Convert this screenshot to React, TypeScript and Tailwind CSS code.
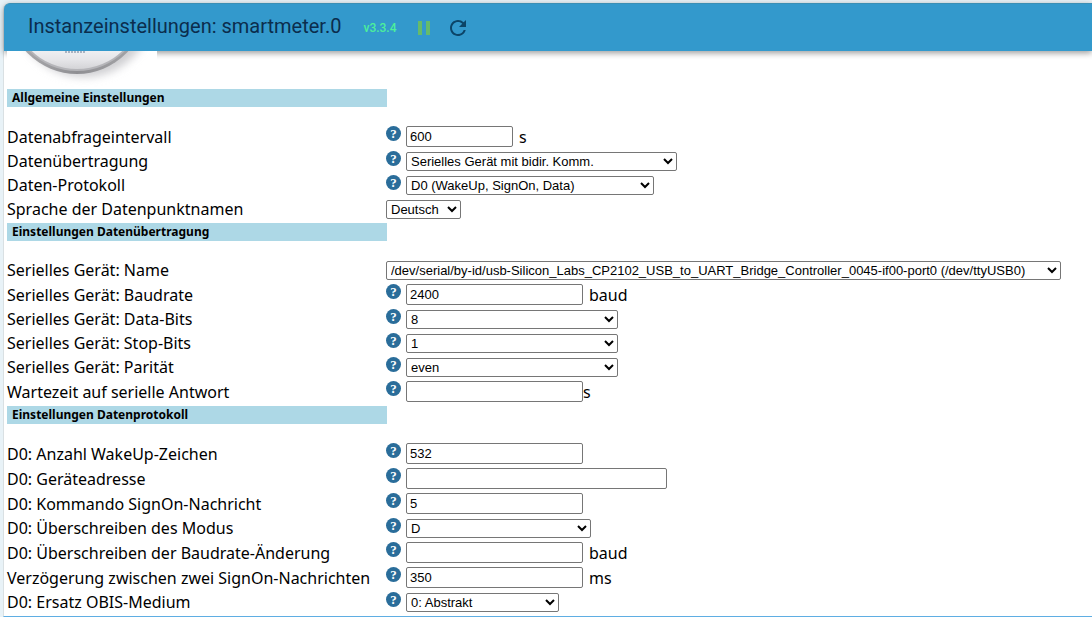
import { useState, type ReactNode } from 'react'
import { MdPause, MdRefresh } from 'react-icons/md'

const SERIAL_PORT = '/dev/serial/by-id/usb-Silicon_Labs_CP2102_USB_to_UART_Bridge_Controller_0045-if00-port0 (/dev/ttyUSB0)'

export default function App() {
  return (
    <div className="bg-[#e8f2f7] pt-[3px] pl-[3px]">
      <div className="rounded-tl-md border-b border-l border-b-[#5faee3] border-l-[#d9e0e3] bg-white pb-0.5 text-black">
        <TitleBar />
        <MeterImage />

        <main className="pl-[3px] font-['Noto_Sans',sans-serif]">
          <Section title="Allgemeine Einstellungen">
            <TextRow id="interval" label="Datenabfrageintervall" value="600" width="w-[107px]" unit="s" />
            <SelectRow id="transfer" label="Datenübertragung" options={['Serielles Gerät mit bidir. Komm.']} width="w-[271px]" />
            <SelectRow id="protocol" label="Daten-Protokoll" options={['D0 (WakeUp, SignOn, Data)']} width="w-[248px]" />
            <SelectRow id="language" label="Sprache der Datenpunktnamen" options={['Deutsch']} width="w-[75px]" help={false} />
          </Section>

          <Section title="Einstellungen Datenübertragung">
            <SelectRow id="port" label="Serielles Gerät: Name" options={[SERIAL_PORT]} width="w-[675px]" help={false} />
            <TextRow id="baudrate" label="Serielles Gerät: Baudrate" value="2400" unit="baud" />
            <SelectRow id="databits" label="Serielles Gerät: Data-Bits" options={['8', '7']} width="w-[212px]" />
            <SelectRow id="stopbits" label="Serielles Gerät: Stop-Bits" options={['1', '2']} width="w-[212px]" />
            <SelectRow id="parity" label="Serielles Gerät: Parität" options={['even', 'none', 'odd']} width="w-[212px]" />
            <TextRow id="timeout" label="Wartezeit auf serielle Antwort" value="" unit="s" tight />
          </Section>

          <Section title="Einstellungen Datenprotokoll">
            <TextRow id="wakeup" label="D0: Anzahl WakeUp-Zeichen" value="532" />
            <TextRow id="address" label="D0: Geräteadresse" value="" width="w-[261px]" />
            <TextRow id="signon" label="D0: Kommando SignOn-Nachricht" value="5" />
            <SelectRow id="mode" label="D0: Überschreiben des Modus" options={['D']} width="w-[185px]" />
            <TextRow id="baudchange" label="D0: Überschreiben der Baudrate-Änderung" value="" unit="baud" />
            <TextRow id="delay" label="Verzögerung zwischen zwei SignOn-Nachrichten" value="350" unit="ms" />
            <SelectRow id="medium" label="D0: Ersatz OBIS-Medium" options={['0: Abstrakt']} width="w-[153px]" />
          </Section>
        </main>
      </div>
    </div>
  )
}

function TitleBar() {
  return (
    <header className="flex h-12 items-center rounded-tl-md border-t border-[#3a8fb5] bg-[#3399cc] pl-6 font-[Roboto,sans-serif] text-[#0b2d4d] shadow-[0_2px_6px_rgba(0,0,0,0.4)]">
      <h1 className="-mt-1 text-xl">Instanzeinstellungen: smartmeter.0</h1>
      <span className="ml-[22px] text-xs font-medium text-[#4df09a]">v3.3.4</span>
      <button type="button" aria-label="Pause" className="ml-[15px] text-[#66bb6a]">
        <MdPause className="size-6" />
      </button>
      <button type="button" aria-label="Neu laden" className="ml-2.5 text-[#0c4568]">
        <MdRefresh className="size-6" />
      </button>
    </header>
  )
}

// Lower edge of the round adapter logo, the rest is scrolled under the title bar
function MeterImage() {
  return (
    <svg viewBox="0 0 150 38" className="ml-[3px] block h-[38px] w-[150px]" aria-hidden="true">
      <defs>
        <linearGradient id="rim" x1="0" x2="1">
          <stop offset="0.1" stopColor="#a9a9ac" />
          <stop offset="0.5" stopColor="#8f8f93" />
          <stop offset="0.9" stopColor="#a3a3a6" />
        </linearGradient>
        <linearGradient id="face" x1="0" x2="0" y1="0.82" y2="1">
          <stop offset="0" stopColor="#f4f5f7" />
          <stop offset="0.6" stopColor="#e6e6e9" />
          <stop offset="1" stopColor="#d4d4d7" />
        </linearGradient>
        <filter id="soft" x="-20%" y="-20%" width="140%" height="140%">
          <feGaussianBlur stdDeviation="4" />
        </filter>
      </defs>
      <rect width="150" height="38" fill="#fff" />
      <circle cx="77" cy="-44" r="70" fill="#cfcfd2" filter="url(#soft)" />
      <circle cx="70" cy="-46" r="69" fill="url(#rim)" />
      <circle cx="70" cy="-47" r="67" fill="#b5b5b9" />
      <circle cx="70" cy="-48" r="66" fill="url(#face)" />
      <path d="M58 1H79" stroke="#a9b3c2" strokeWidth="2" strokeDasharray="2 1" />
    </svg>
  )
}

function Section({ title, children }: { title: string; children: ReactNode }) {
  return (
    <section className="mb-0.5 last:mb-0">
      <h2 className="mb-[17px] h-[18px] w-[380px] bg-[#add8e6] pl-[5px] text-xs leading-[18px] font-bold">{title}</h2>
      {children}
    </section>
  )
}

function HelpIcon() {
  return (
    <span
      aria-hidden="true"
      className="mt-0.5 mr-[5px] flex size-[15px] shrink-0 items-center justify-center self-start rounded-full bg-[#2a6d9a] font-['Liberation_Serif',serif] text-[13px] leading-none font-bold text-white"
    >
      ?
    </span>
  )
}

function Row({ id, label, help, height, children }: { id: string; label: string; help: boolean; height: string; children: ReactNode }) {
  return (
    <div className={`flex items-center ${height}`}>
      <label htmlFor={id} className="w-[379px] shrink-0 text-base leading-6 whitespace-nowrap">
        {label}
      </label>
      {help && <HelpIcon />}
      {children}
    </div>
  )
}

interface TextRowProps {
  id: string
  label: string
  value: string
  width?: string
  unit?: string
  tight?: boolean
}

function TextRow({ id, label, value, width = 'w-[177px]', unit, tight = false }: TextRowProps) {
  const [text, setText] = useState(value)

  return (
    <Row id={id} label={label} help height="h-[25px]">
      <input
        id={id}
        type="text"
        value={text}
        onChange={(e) => setText(e.target.value)}
        className={`h-[21px] rounded-[2px] border border-[#767676] bg-white px-[3px] font-['Liberation_Sans',sans-serif] text-[13px] ${width}`}
      />
      {unit && <span className={`text-base leading-6 ${tight ? '' : 'ml-1.5'}`}>{unit}</span>}
    </Row>
  )
}

interface SelectRowProps {
  id: string
  label: string
  options: string[]
  width: string
  help?: boolean
}

function SelectRow({ id, label, options, width, help = true }: SelectRowProps) {
  return (
    <Row id={id} label={label} help={help} height="h-6">
      <select
        id={id}
        className={`h-[19px] rounded-[2px] border border-[#767676] bg-white font-['Liberation_Sans',sans-serif] text-[13px] ${width}`}
      >
        {options.map((o) => (
          <option key={o}>{o}</option>
        ))}
      </select>
    </Row>
  )
}
